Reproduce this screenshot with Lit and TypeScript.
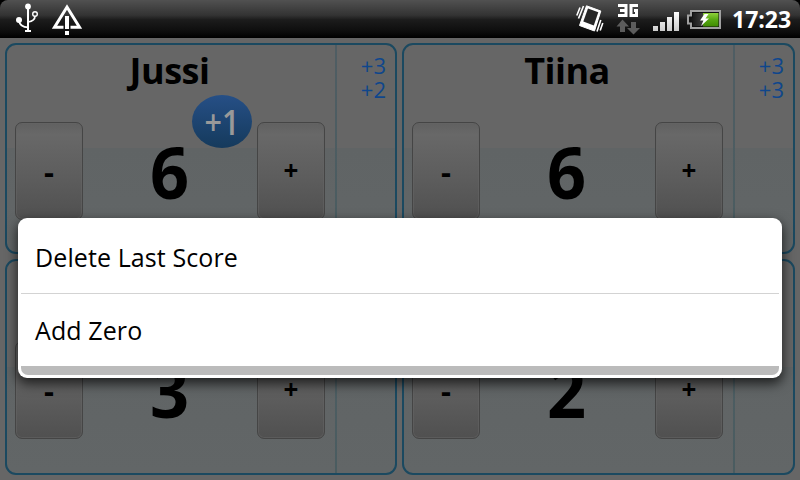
import { LitElement, html, css } from "lit";
import { customElement, property } from "lit/decorators.js";

@customElement("status-bar")
class StatusBar extends LitElement {
  static styles = css`
    :host { display: flex; align-items: flex-start; height: 38px; box-sizing: border-box; background: #000; }
    .bar { flex: 1; height: 38px; display: flex; justify-content: space-between; border-radius: 8px 8px 0 0; background: linear-gradient(#515151, #333 40%, #1c1c1c 52%, #0c0c0c 85%, #000); }
    .clock { font: bold 23px/38px "Open Sans", "Noto Sans", sans-serif; color: #fff; width: 68px; white-space: nowrap; }
    .right { display: flex; }
    svg { display: block; }
  `;
  render() {
    return html`<div class="bar">
      <svg width="110" height="38" viewBox="0 0 110 38" fill="none" stroke="#fff">
        <g stroke-width="1.7">
          <path d="M28 7V31" stroke-width="2" />
          <path d="M19 21Q20 27 28 27.300M35 16Q35 21 28 22" />
          <circle cx="35" cy="14" r="2.300" stroke-width="1.400" />
          <path d="M25 31H31" stroke-width="2" />
        </g>
        <circle cx="28" cy="6.500" r="2.900" fill="#fff" stroke="none" />
        <circle cx="19" cy="20" r="3" fill="#fff" stroke="none" />
        <path d="M63.500 27.300H54.500L67 7L79.500 27.300H70.500" stroke-width="3" />
        <path d="M67 16V29M67 31V35" stroke-width="4" />
      </svg>
      <div class="right">
        <svg width="172" height="38" viewBox="560 0 172 38" fill="none">
          <path d="M586.500 5.800L600.800 11L594.500 31L579.500 25.500Z" fill="#fff" stroke="#fff" stroke-width="1" stroke-linejoin="round" />
          <path d="M588 8.500L598.300 12.300L593.800 25.500L583.300 21.500Z" fill="#262626" />
          <path d="M583.500 6L578.500 18.500M580 7.500L576.800 15.500M597 31.500L600.800 20M600.200 30.500L602.800 23" stroke="#fff" stroke-width="1.600" />
          <path d="M618 5.500H626V15.500H618M620 10.500H626M638 5.500H631V15.500H636.500V10.500H634" stroke="#fff" stroke-width="3" />
          <path d="M622.500 19.500L629 26.500H625V32H620V26.500H616.500Z M633.500 34.500L627 28H631V22H636V28H640Z" fill="#5c5c5c" />
          <path d="M653 26h5v5h-5zM660 22h5v9h-5zM667 17h5v14h-5zM674 12h5v19h-5z" fill="url(#sig)" />
          <path d="M691 11H720V28H691V23.500H688V15.500H691Z" fill="#111" stroke="#a0a0a0" stroke-width="2" />
          <path d="M693 13H705V26H693V21.500H690V17.500H693Z" fill="url(#cell)" />
          <path d="M703 13H718.500V26.500H703Z" fill="url(#charge)" />
          <path d="M704.500 14L700 20.500H703.500L701 26L709 18.500H705.500L708.500 14Z" fill="#fff" />
          <defs>
            <linearGradient id="sig" x1="0" y1="12" x2="0" y2="31" gradientUnits="userSpaceOnUse"><stop stop-color="#fff" /><stop offset="1" stop-color="#ccc" /></linearGradient>
            <linearGradient id="cell"><stop stop-color="#111" /><stop offset="1" stop-color="#444" /></linearGradient>
            <linearGradient id="charge" x1="0" y1="0" x2="0" y2="1"><stop stop-color="#8fd13c" /><stop offset=".5" stop-color="#57a812" /><stop offset="1" stop-color="#3f8c02" /></linearGradient>
          </defs>
        </svg>
        <span class="clock">17:23</span>
      </div>
    </div>`;
  }
}

@customElement("score-card")
class ScoreCard extends LitElement {
  @property() name = "";
  @property() score = "";
  @property() badge = "";
  @property({ attribute: false }) history: string[] = [];
  static styles = css`
    :host { display: grid; grid-template-columns: 1fr 2px 58px; box-sizing: border-box; border: 2px solid #1b4960; border-radius: 11px; overflow: hidden; background: linear-gradient(#666 50%, #606465 50%, #626667); font-family: "Open Sans", "Noto Sans", sans-serif; color: #000; }
    .main { display: flex; flex-direction: column; padding: 0 10px 0 8px; }
    .name { height: 77px; box-sizing: border-box; padding: 2px 1px 0 0; font-weight: 700; font-size: 36px; line-height: 48px; text-align: center; letter-spacing: -.5px; }
    .row { display: grid; grid-template-columns: 68px 1fr 68px; height: var(--row-height, 97px); }
    .btn { display: flex; align-items: center; justify-content: center; border: 1px solid #454545; border-radius: 7px; background: linear-gradient(#606060, #686868 12%, #5c5c5c 60%, #505050); font-size: 26px; font-weight: 700; padding-bottom: 2px; box-shadow: inset 0 0 0 1px #66666688; }
    .minus { font-size: 31px; padding-bottom: 0; }
    .score { position: relative; display: flex; align-items: center; justify-content: center; font-weight: 700; font-size: 72px; line-height: 97px; padding: 1px 1px 0 0; }
    .digit { transform: scaleX(.95); }
    .badge { position: absolute; left: 109px; top: -27px; width: 60px; height: 53px; border-radius: 50%; background: linear-gradient(#264f86, #153a5c); color: #999; font: 600 35px/54px "Open Sans", sans-serif; display: flex; justify-content: center; }
    .gain { transform: scaleX(.87); }
    .rule { background: linear-gradient(#4f5d63, #4a5c60); }
    .history { padding: 8px 9px 0 0; text-align: right; font-size: 22px; line-height: 24px; color: #0f468c; }
  `;
  render() {
    return html`
      <div class="main">
        <div class="name">${this.name}</div>
        <div class="row">
          <div class="btn minus">-</div>
          <div class="score"><span class="digit">${this.score}</span>${this.badge ? html`<div class="badge"><span class="gain">${this.badge}</span></div>` : ""}</div>
          <div class="btn">+</div>
        </div>
      </div>
      <div class="rule"></div>
      <div class="history">${this.history.map((h) => html`<div>${h}</div>`)}</div>`;
  }
}

@customElement("app-root")
class AppRoot extends LitElement {
  static styles = css`
    :host { display: block; position: relative; width: 800px; height: 480px; overflow: hidden; background: #666; font-family: "Open Sans", "Noto Sans", sans-serif; }
    .board { display: grid; grid-template-columns: 392px 393px; grid-template-rows: 211px 216px; gap: 5px; padding: 5px; }
    .lower { padding-top: 3px; --row-height: 98px; }
    .menu { position: absolute; left: 18px; top: 218px; width: 764px; height: 160px; box-sizing: border-box; padding: 3px; border-radius: 9px; background: #fff; box-shadow: 0 5px 12px 1px #000a; display: flex; flex-direction: column; }
    .item { height: 72px; padding-left: 14px; font-size: 25px; line-height: 72px; color: #000; letter-spacing: .1px; }
    .first { border-bottom: 1px solid #d3d3d3; }
    .foot { height: 9px; background: #bbb; border-radius: 0 0 7px 7px; }
  `;
  render() {
    return html`
      <status-bar></status-bar>
      <div class="board">
        <score-card name="Jussi" score="6" badge="+1" .history=${["+3", "+2"]}></score-card>
        <score-card name="Tiina" score="6" .history=${["+3", "+3"]}></score-card>
        <score-card class="lower" score="3"></score-card>
        <score-card class="lower" score="2"></score-card>
      </div>
      <div class="menu">
        <div class="item first">Delete Last Score</div>
        <div class="item">Add Zero</div>
        <div class="foot"></div>
      </div>`;
  }
}
